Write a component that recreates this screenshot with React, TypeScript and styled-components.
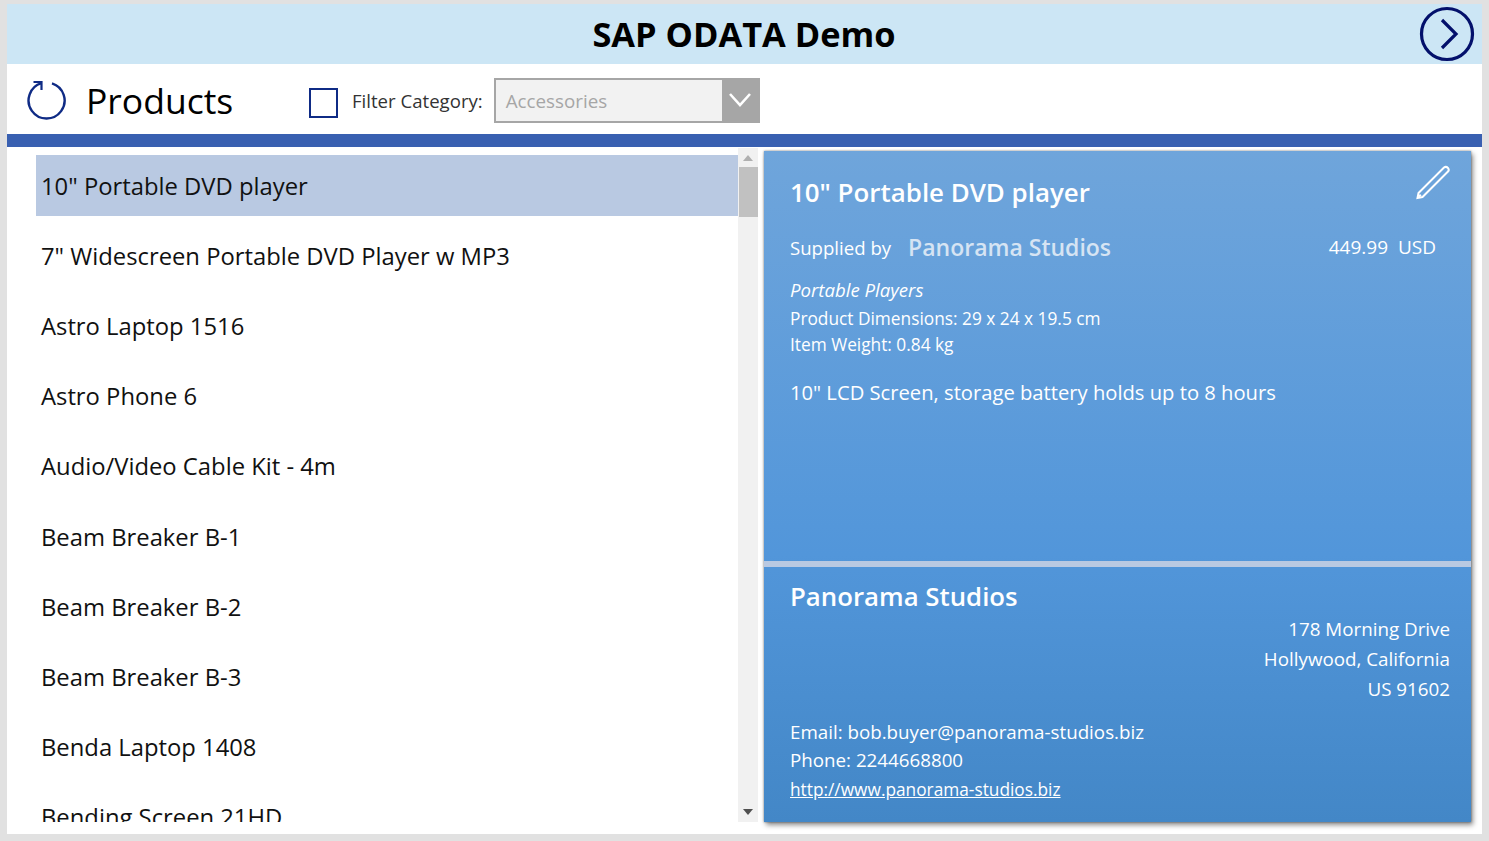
import React from "react";
import styled, { createGlobalStyle } from "styled-components";

const Global = createGlobalStyle`
  html, body { margin: 0; padding: 0; background: #e1e1e1; overflow: hidden; }
  body { font-family: "Open Sans", "Noto Sans", sans-serif; }
`;

const Canvas = styled.div`
  box-sizing: border-box;
  width: 1475px;
  height: 830px;
  margin: 4px 0 0 7px;
  background: #fff;
  display: flex;
  flex-direction: column;
`;

const Header = styled.header`
  height: 60px;
  flex: none;
  background: #cce6f5;
  display: flex;
  align-items: center;
  justify-content: space-between;
  padding: 3px 7px 0 0;
  box-sizing: border-box;
`;

const Title = styled.h1`
  flex: 1;
  margin: -3px 0 0 62px;
  text-align: center;
  font-size: 34.4px;
  line-height: 60px;
  font-weight: 700;
  color: #000;
`;

const RoundButton = styled.svg`
  display: block;
  width: 56px;
  height: 56px;
  margin-top: -3px;
`;

const Toolbar = styled.div`
  height: 70px;
  flex: none;
  display: flex;
  align-items: center;
  padding-left: 19px;
`;

const RefreshIcon = styled.svg`
  width: 42px;
  height: 42px;
  flex: none;
  margin-top: 1px;
`;

const PageTitle = styled.h2`
  margin: 2px 0 0 18px;
  width: 223px;
  font-size: 35.5px;
  font-weight: 400;
  color: #000;
  line-height: 46px;
`;

const Check = styled.span`
  box-sizing: border-box;
  width: 29px;
  height: 30px;
  flex: none;
  margin-top: 7px;
  border: 2px solid #0f2b85;
`;

const FilterLabel = styled.label`
  margin: 2px 11px 0 14px;
  font-size: 18.6px;
  color: #333;
`;

const Select = styled.div`
  box-sizing: border-box;
  width: 266px;
  height: 45px;
  margin-top: 2px;
  border: 2px solid #a6a6a6;
  background: #f2f2f2;
  display: flex;
  align-items: center;
  justify-content: space-between;
  font-size: 18.8px;
  color: #a6a6a6;
  padding-left: 10px;
`;

const SelectValue = styled.span`
  margin-top: 2px;
`;

const SelectArrow = styled.span`
  width: 36px;
  height: 100%;
  background: #a6a6a6;
  display: flex;
  align-items: center;
  justify-content: center;
`;

const Rule = styled.div`
  height: 13px;
  flex: none;
  background: #3960b1;
`;

const Body = styled.main`
  flex: 1;
  min-height: 0;
  display: flex;
  align-items: flex-start;
`;

const ListColumn = styled.div`
  margin: 8px 0 0 29px;
  width: 702px;
  height: 667px;
  overflow: hidden;
  flex: none;
`;

const Row = styled.div<{ $selected?: boolean }>`
  box-sizing: border-box;
  height: 70.2px;
  padding: 0 5px 9px;
  display: flex;
  align-items: center;
  font-size: 23.8px;
  color: #111;
  background: ${(p) =>
    p.$selected
      ? "linear-gradient(#b9c9e2 0 61px, transparent 61px)"
      : "transparent"};
`;

const Scrollbar = styled.div`
  position: relative;
  margin-top: 1px;
  width: 20px;
  height: 674px;
  flex: none;
  background: #f1f1f1;
`;

const ScrollThumb = styled.div`
  position: absolute;
  top: 19px;
  left: 1px;
  width: 19px;
  height: 50px;
  background: #c1c1c1;
`;

const ArrowUp = styled.div`
  position: absolute;
  top: 7px;
  left: 5px;
  border: 5px solid transparent;
  border-top: 0;
  border-bottom: 6px solid #b0b0b0;
`;

const ArrowDown = styled.div`
  position: absolute;
  bottom: 7px;
  left: 5px;
  border: 5px solid transparent;
  border-bottom: 0;
  border-top: 6px solid #505050;
`;

const Card = styled.section`
  position: relative;
  box-sizing: border-box;
  margin: 4px 0 0 6px;
  width: 707px;
  height: 671px;
  flex: none;
  background: linear-gradient(#6fa5db, #5296da 60%, #4387c7);
  box-shadow: 0 0 2px rgba(0, 0, 0, 0.45), 2px 3px 5px rgba(0, 0, 0, 0.45);
  color: #fff;
  display: flex;
  flex-direction: column;
`;

const Product = styled.div`
  height: 410px;
  flex: none;
  box-sizing: border-box;
  padding: 21px 35px 0 26px;
`;

const ProductName = styled.h3`
  margin: 0;
  font-size: 25.9px;
  line-height: 40px;
  font-weight: 600;
`;

const SupplierRow = styled.div`
  margin-top: 19px;
  display: flex;
  align-items: center;
  height: 32px;
  font-size: 18.6px;
`;

const SupplierName = styled.span`
  margin-left: 17px;
  flex: 1;
  font-size: 23px;
  font-weight: 600;
  color: #d6e4f3;
`;

const Price = styled.span`
  font-size: 19px;
`;

const Category = styled.div`
  margin-top: 13px;
  margin-bottom: 2px;
  font-size: 18.6px;
  font-style: italic;
  line-height: 28px;
`;

const Spec = styled.div`
  font-size: 17.3px;
  line-height: 26px;
`;

const Description = styled.div`
  margin-top: 19px;
  font-size: 20.2px;
  line-height: 30px;
`;

const EditIcon = styled.svg`
  position: absolute;
  top: 13px;
  right: 20px;
  width: 36px;
  height: 36px;
`;

const Divider = styled.div`
  height: 6px;
  flex: none;
  background: #b9c9e2;
`;

const Supplier = styled.div`
  flex: 1;
  padding: 10px 21px 0 26px;
  display: flex;
  flex-direction: column;
`;

const SupplierTitle = styled.h3`
  margin: 0;
  font-size: 25.8px;
  line-height: 38px;
  font-weight: 600;
`;

const Address = styled.div`
  margin-top: -1px;
  text-align: right;
  font-size: 18.8px;
  line-height: 30px;
`;

const Contact = styled.div`
  margin-top: 14px;
  font-size: 18.75px;
  line-height: 28px;
`;

const Website = styled.a`
  display: block;
  margin-top: 2px;
  font-size: 17.3px;
  line-height: 28px;
  color: #fff;
  text-decoration: underline;
`;

const products = [
  '10" Portable DVD player',
  '7" Widescreen Portable DVD Player w MP3',
  "Astro Laptop 1516",
  "Astro Phone 6",
  "Audio/Video Cable Kit - 4m",
  "Beam Breaker B-1",
  "Beam Breaker B-2",
  "Beam Breaker B-3",
  "Benda Laptop 1408",
  "Bending Screen 21HD",
];

export default function App() {
  return (
    <>
      <Global />
      <Canvas>
        <Header>
          <Title>SAP ODATA Demo</Title>
          <RoundButton viewBox="0 0 56 56" fill="none" stroke="#03106b" strokeWidth="3.2">
            <circle cx="28" cy="28" r="25.5" />
            <path d="M23 14 L37 28 L23 42" />
          </RoundButton>
        </Header>
        <Toolbar>
          <RefreshIcon viewBox="0 0 42 42" fill="none" stroke="#0f2b85" strokeWidth="2.4">
            <path d="M15.5 4.2 A18 18 0 1 0 26 4.3" />
            <path d="M7.5 3 L15.5 3 L15.5 11" strokeWidth="2.2" />
          </RefreshIcon>
          <PageTitle>Products</PageTitle>
          <Check />
          <FilterLabel>Filter Category:</FilterLabel>
          <Select>
            <SelectValue>Accessories</SelectValue>
            <SelectArrow>
              <svg width="24" height="16" viewBox="0 0 24 16" fill="none" stroke="#fff" strokeWidth="2.6">
                <path d="M2 2 L12 13 L22 2" />
              </svg>
            </SelectArrow>
          </Select>
        </Toolbar>
        <Rule />
        <Body>
          <ListColumn>
            {products.map((name, i) => (
              <Row key={name} $selected={i === 0}>{name}</Row>
            ))}
          </ListColumn>
          <Scrollbar>
            <ArrowUp />
            <ScrollThumb />
            <ArrowDown />
          </Scrollbar>
          <Card>
            <EditIcon viewBox="0 0 36 36" fill="none" stroke="#fff" strokeWidth="2">
              <path d="M3.5 29 L29 3.5 Q31 2 33 4 Q34.5 6 33 7.5 L7.5 33 L2.5 34 Z" />
              <path d="M4 31 L5.5 32.5" strokeWidth="3" />
            </EditIcon>
            <Product>
              <ProductName>10" Portable DVD player</ProductName>
              <SupplierRow>
                Supplied by
                <SupplierName>Panorama Studios</SupplierName>
                <Price>449.99&nbsp; USD</Price>
              </SupplierRow>
              <Category>Portable Players</Category>
              <Spec>Product Dimensions: 29 x 24 x 19.5 cm</Spec>
              <Spec>Item Weight: 0.84 kg</Spec>
              <Description>10" LCD Screen, storage battery holds up to 8 hours</Description>
            </Product>
            <Divider />
            <Supplier>
              <SupplierTitle>Panorama Studios</SupplierTitle>
              <Address>
                178 Morning Drive<br />
                Hollywood, California<br />
                US 91602
              </Address>
              <Contact>
                Email: bob.buyer@panorama-studios.biz<br />
                Phone: 2244668800
              </Contact>
              <Website href="#">http://www.panorama-studios.biz</Website>
            </Supplier>
          </Card>
        </Body>
      </Canvas>
    </>
  );
}
